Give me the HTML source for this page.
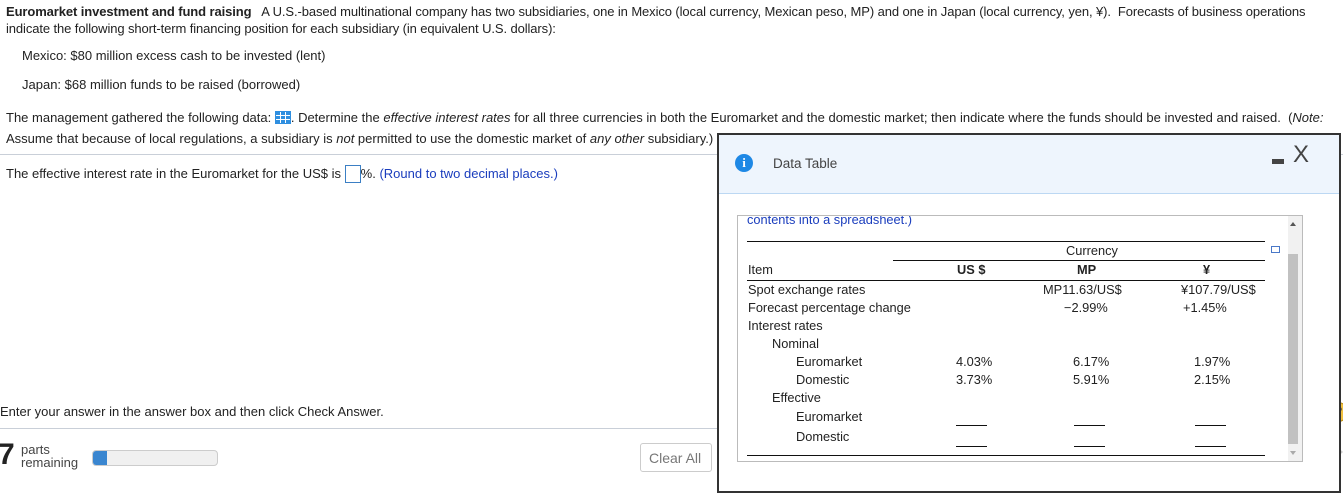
<!DOCTYPE html>
<html><head><meta charset="utf-8"><style>
*{margin:0;padding:0;box-sizing:border-box}
body{width:1343px;height:474px;overflow:hidden;background:#fff;font-family:"Liberation Sans",sans-serif;font-size:13px;color:#222;position:relative}
.a{position:absolute;white-space:nowrap}
.blue{color:#1a3dbd}
.hr{position:absolute;height:1px;background:#c9cfd8}
.t{position:absolute;font-size:12.8px;white-space:nowrap}
.ln{position:absolute;height:1px;background:#111}
.bl{position:absolute;height:1px;background:#111;width:31px}
</style></head><body>
<div class="a" style="left:6px;top:3px;line-height:17px;letter-spacing:-0.1px"><b>Euromarket investment and fund raising</b>&nbsp;&nbsp; A U.S.-based multinational company has two subsidiaries, one in Mexico (local currency, Mexican peso, MP) and one in Japan (local currency, yen, ¥).&nbsp; Forecasts of business operations<br>indicate the following short-term financing position for each subsidiary (in equivalent U.S. dollars):</div>
<div class="a" style="left:22px;top:48px">Mexico: $80 million excess cash to be invested (lent)</div>
<div class="a" style="left:22px;top:77px">Japan: $68 million funds to be raised (borrowed)</div>
<div class="a" style="left:6px;top:110px">The management gathered the following data: <span style="display:inline-block;width:16px;height:13px;vertical-align:-2px;background:#2f8fe0;border:1px solid #2f8fe0;background-image:linear-gradient(#fff 0 0),linear-gradient(#fff 0 0),linear-gradient(#fff 0 0),linear-gradient(#fff 0 0);background-size:1px 100%,1px 100%,100% 1px,100% 1px;background-position:4px 0,9px 0,0 3px,0 7px;background-repeat:no-repeat"></span>. Determine the <i>effective interest rates</i> for all three currencies in both the Euromarket and the domestic market; then indicate where the funds should be invested and raised.&nbsp; (<i>Note:</i></div>
<div class="a" style="left:6px;top:131px">Assume that because of local regulations, a subsidiary is <i>not</i> permitted to use the domestic market of <i>any other</i> subsidiary.)</div>
<div class="hr" style="left:0;top:154px;width:1343px"></div>
<div class="a" style="left:6px;top:165px">The effective interest rate in the Euromarket for the US$ is <span style="display:inline-block;width:16px;height:18px;border:1px solid #3b7fc4;vertical-align:-5px"></span>%. <span class="blue">(Round to two decimal places.)</span></div>
<div class="a" style="left:0;top:404px">Enter your answer in the answer box and then click Check Answer.</div>
<div class="hr" style="left:0;top:428px;width:720px"></div>
<div class="a" style="left:-2px;top:440px;font-size:30px;font-weight:bold;line-height:30px">7</div>
<div class="a" style="left:21px;top:443px;line-height:13px;color:#444">parts<br>remaining</div>
<div class="a" style="left:92px;top:450px;width:126px;height:16px;border:1px solid #ccc;border-radius:4px;background:#f0f0f0"><div style="width:14px;height:14px;background:#3a86d0;border-radius:3px 0 0 3px"></div></div>
<div class="a" style="left:640px;top:443px;width:72px;height:29px;border:1px solid #ccc;border-radius:3px;color:#777;font-size:14px;padding:6px 0 0 8px">Clear All</div>
<div class="a" style="left:1328px;top:402px;width:20px;height:20px;border-radius:50%;background:#f0c040;border:1px solid #b98a10;font-weight:bold;color:#444;padding-left:5px;font-size:14px">?</div>
<div class="a" style="left:1330px;top:440px;width:0;height:0;border-left:13px solid #ccc;border-top:12px solid transparent;border-bottom:12px solid transparent"></div>
<!-- modal -->
<div class="a" style="left:717px;top:133px;width:624px;height:360px;border:2px solid #333;background:#fff">
 <div style="position:absolute;left:0;top:0;width:620px;height:59px;background:#eef5fd;border-bottom:1px solid #bcd8f3"></div>
 <div style="position:absolute;left:16px;top:19px;width:18px;height:18px;border-radius:50%;background:#1e88e5;color:#fff;font-weight:bold;font-size:13px;text-align:center;line-height:18px;font-family:'Liberation Serif',serif">i</div>
 <div style="position:absolute;left:54px;top:21px;font-size:13.5px;color:#444">Data Table</div>
 <div style="position:absolute;left:553px;top:24px;width:12px;height:5px;background:#444"></div>
 <div style="position:absolute;left:574px;top:6px;font-size:24px;color:#444;font-weight:300">X</div>
</div>
<div class="a" style="left:737px;top:215px;width:566px;height:247px;border:1px solid #bbb;overflow:hidden">
 <div class="t blue" style="left:9px;top:-4px">contents into a spreadsheet.)</div>
 <div style="position:absolute;left:550px;top:0;width:14px;height:246px;background:#f1f1f1"></div>
 <div style="position:absolute;left:550px;top:38px;width:10px;height:190px;background:#c1c1c1"></div>
 <div style="position:absolute;left:552px;top:6px;border-left:3px solid transparent;border-right:3px solid transparent;border-bottom:4px solid #555"></div>
 <div style="position:absolute;left:552px;top:235px;border-left:3px solid transparent;border-right:3px solid transparent;border-top:4px solid #aaa"></div>
 <div style="position:absolute;left:533px;top:30px;width:9px;height:7px;border:1px solid #4a78c8"></div>
</div>
<div class="ln" style="left:747px;top:241px;width:518px"></div>
<div class="t" style="left:1066px;top:243px">Currency</div>
<div class="ln" style="left:893px;top:260px;width:372px"></div>
<div class="t" style="left:748px;top:262px">Item</div>
<div class="t" style="left:957px;top:262px;font-weight:bold">US $</div>
<div class="t" style="left:1077px;top:262px;font-weight:bold">MP</div>
<div class="t" style="left:1203px;top:262px;font-weight:bold">¥</div>
<div class="ln" style="left:747px;top:280px;width:518px"></div>
<div class="t" style="left:748px;top:282px">Spot exchange rates</div>
<div class="t" style="left:1043px;top:282px">MP11.63/US$</div>
<div class="t" style="left:1181px;top:282px">¥107.79/US$</div>
<div class="t" style="left:748px;top:300px">Forecast percentage change</div>
<div class="t" style="left:1064px;top:300px">−2.99%</div>
<div class="t" style="left:1183px;top:300px">+1.45%</div>
<div class="t" style="left:748px;top:318px">Interest rates</div>
<div class="t" style="left:772px;top:336px">Nominal</div>
<div class="t" style="left:796px;top:354px">Euromarket</div>
<div class="t" style="left:956px;top:354px">4.03%</div>
<div class="t" style="left:1073px;top:354px">6.17%</div>
<div class="t" style="left:1194px;top:354px">1.97%</div>
<div class="t" style="left:796px;top:372px">Domestic</div>
<div class="t" style="left:956px;top:372px">3.73%</div>
<div class="t" style="left:1073px;top:372px">5.91%</div>
<div class="t" style="left:1194px;top:372px">2.15%</div>
<div class="t" style="left:772px;top:390px">Effective</div>
<div class="t" style="left:796px;top:409px">Euromarket</div>
<div class="bl" style="left:956px;top:425px"></div>
<div class="bl" style="left:1074px;top:425px"></div>
<div class="bl" style="left:1195px;top:425px"></div>
<div class="t" style="left:796px;top:429px">Domestic</div>
<div class="bl" style="left:956px;top:446px"></div>
<div class="bl" style="left:1074px;top:446px"></div>
<div class="bl" style="left:1195px;top:446px"></div>
<div class="ln" style="left:747px;top:455px;width:518px"></div>
</body></html>
